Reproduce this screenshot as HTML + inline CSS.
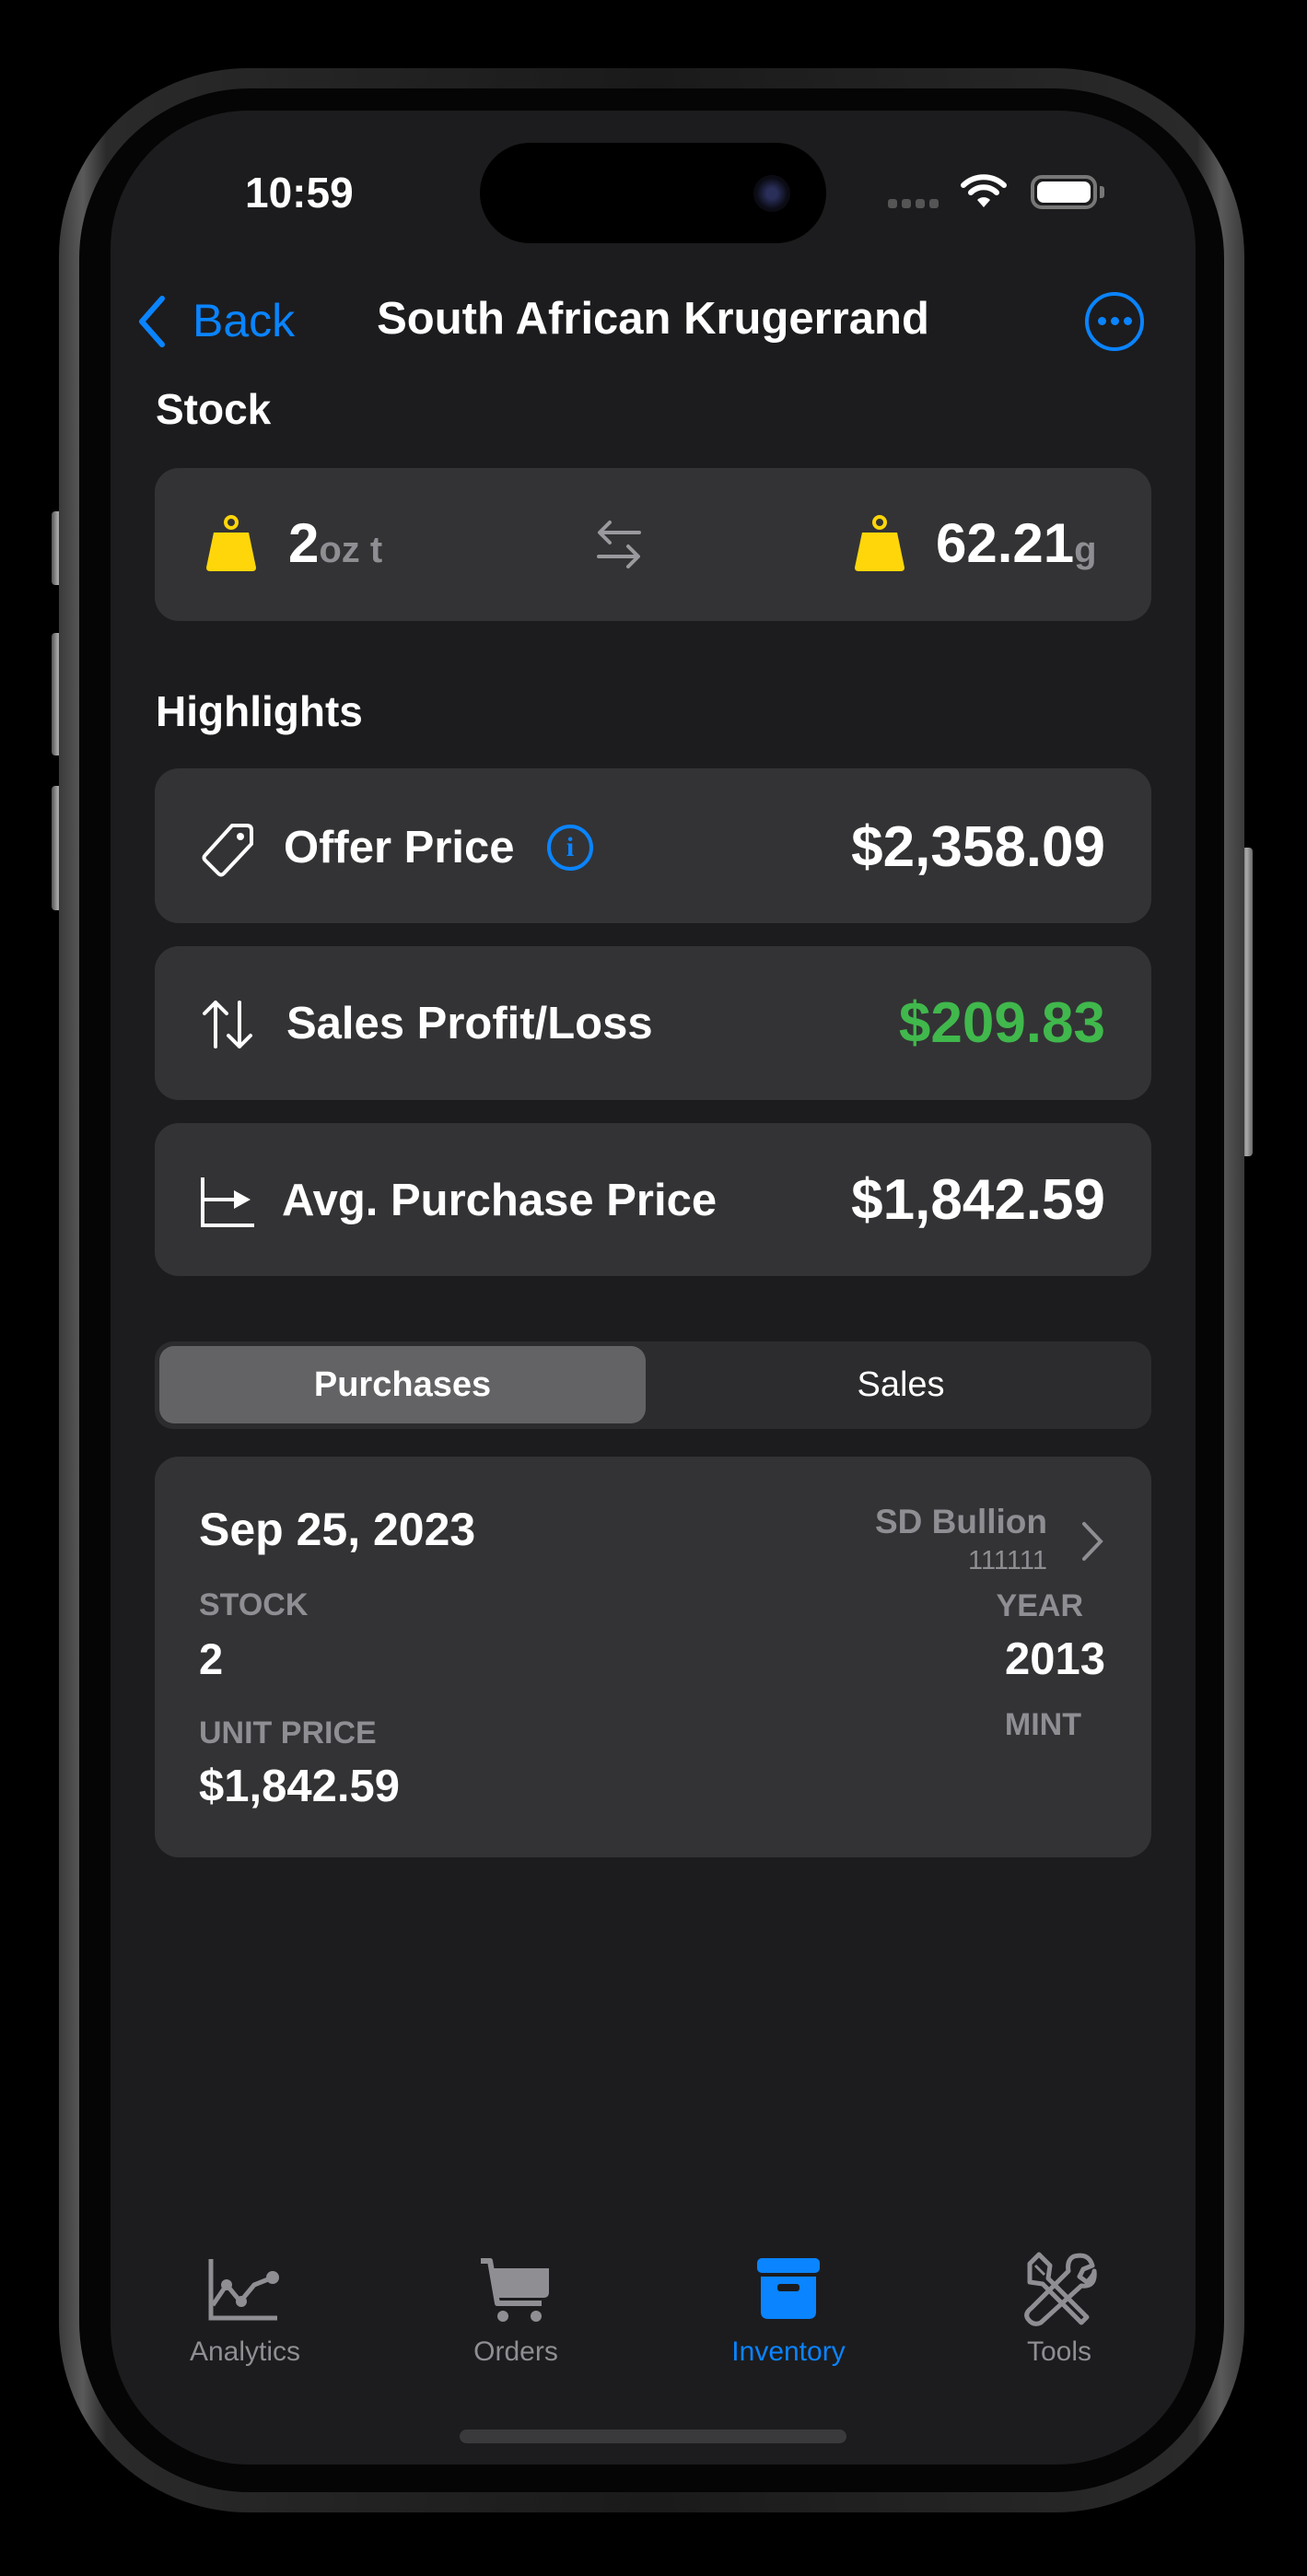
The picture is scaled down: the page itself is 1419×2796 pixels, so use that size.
<!DOCTYPE html>
<html><head><meta charset="utf-8"><style>
*{margin:0;padding:0;box-sizing:border-box}
body{width:1419px;height:2796px;background:#000;position:relative;overflow:hidden;font-family:"Liberation Sans",sans-serif;color:#fff}
.a{position:absolute}
.t{position:absolute;white-space:nowrap;line-height:1}
.card{position:absolute;left:168px;width:1082px;background:#333335;border-radius:26px}
.btn{position:absolute;background:linear-gradient(90deg,#555,#aaa,#666);border-radius:4px}
</style></head><body>
<!-- side buttons -->
<div class="btn" style="left:56px;top:555px;width:14px;height:80px"></div>
<div class="btn" style="left:56px;top:687px;width:14px;height:133px"></div>
<div class="btn" style="left:56px;top:853px;width:14px;height:135px"></div>
<div class="btn" style="left:1347px;top:920px;width:13px;height:335px"></div>
<!-- frame -->
<div class="a" style="left:64px;top:74px;width:1287px;height:2653px;border-radius:205px;background:linear-gradient(90deg,#3a3a3a,#5a5a5a 2%,#2a2a2a 4%,#1a1a1a 50%,#2a2a2a 96%,#5a5a5a 98%,#3a3a3a)"></div>
<div class="a" style="left:86px;top:96px;width:1243px;height:2609px;border-radius:185px;background:#050505"></div>
<!-- screen -->
<div class="a" style="left:120px;top:120px;width:1178px;height:2555px;border-radius:150px;background:#1c1c1e;overflow:hidden">
</div>
<!-- island -->
<div class="a" style="left:521px;top:155px;width:376px;height:109px;border-radius:55px;background:#000"></div>
<div class="a" style="left:818px;top:190px;width:40px;height:40px;border-radius:50%;background:radial-gradient(circle,#2a2f5a 20%,#0b0b14 60%)"></div>
<!-- status -->
<div class="t" style="left:266px;top:186px;font-size:46px;font-weight:bold">10:59</div>
<div class="a" style="left:964px;top:216px;width:60px;height:10px;display:flex;gap:5px">
<i style="width:10px;height:10px;border-radius:3px;background:#555"></i><i style="width:10px;height:10px;border-radius:3px;background:#555"></i><i style="width:10px;height:10px;border-radius:3px;background:#555"></i><i style="width:10px;height:10px;border-radius:3px;background:#555"></i></div>
<svg class="a" style="left:1043px;top:188px" width="50" height="40" viewBox="0 0 50 40"><path d="M3 13 A32 32 0 0 1 47 13" stroke="#fff" stroke-width="6" fill="none" stroke-linecap="round"/><path d="M11 21 A20 20 0 0 1 39 21" stroke="#fff" stroke-width="6" fill="none" stroke-linecap="round"/><path d="M18 29 L25 37 L32 29 A10 10 0 0 0 18 29Z" fill="#fff"/></svg>
<div class="a" style="left:1119px;top:190px;width:72px;height:37px;border:4px solid #777;border-radius:12px;padding:3px"><div style="width:100%;height:100%;background:#fff;border-radius:7px"></div></div>
<div class="a" style="left:1194px;top:202px;width:5px;height:13px;background:#777;border-radius:0 3px 3px 0"></div>
<!-- nav -->
<svg class="a" style="left:146px;top:320px" width="36" height="58" viewBox="0 0 36 58"><path d="M30 4 L8 29 L30 54" stroke="#0a84ff" stroke-width="6" fill="none" stroke-linecap="round" stroke-linejoin="round"/></svg>
<div class="t" style="left:209px;top:323px;font-size:50px;color:#0a84ff">Back</div>
<div class="t" style="left:406px;top:322px;font-size:49px;font-weight:bold;width:606px;text-align:center">South African Krugerrand</div>
<div class="a" style="left:1178px;top:317px;width:64px;height:64px;border:4px solid #0a84ff;border-radius:50%"></div>
<div class="a" style="left:1192px;top:344px;display:flex;gap:5px"><i style="width:9px;height:9px;border-radius:50%;background:#0a84ff"></i><i style="width:9px;height:9px;border-radius:50%;background:#0a84ff"></i><i style="width:9px;height:9px;border-radius:50%;background:#0a84ff"></i></div>
<!-- Stock -->
<div class="t" style="left:169px;top:421px;font-size:46px;font-weight:bold">Stock</div>
<div class="card" style="top:508px;height:166px"></div>
<svg class="a" style="left:220px;top:558px" width="62" height="64" viewBox="0 0 62 64"><circle cx="31" cy="9" r="6" stroke="#ffd60a" stroke-width="4" fill="none"/><path d="M12 20 H50 L58 58 Q58 62 54 62 H8 Q4 62 4 58Z" fill="#ffd60a"/></svg>
<div class="t" style="left:313px;top:560px;font-size:60px;font-weight:bold">2<span style="font-size:40px;color:#8e8e93;font-weight:bold">oz t</span></div>
<svg class="a" style="left:646px;top:563px" width="52" height="56" viewBox="0 0 52 56"><path d="M48 15 H6 M16 4 L5 15 L16 26 M4 41 H46 M36 30 L47 41 L36 52" stroke="#9a9a9e" stroke-width="4" fill="none" stroke-linecap="round" stroke-linejoin="round"/></svg>
<svg class="a" style="left:924px;top:558px" width="62" height="64" viewBox="0 0 62 64"><circle cx="31" cy="9" r="6" stroke="#ffd60a" stroke-width="4" fill="none"/><path d="M12 20 H50 L58 58 Q58 62 54 62 H8 Q4 62 4 58Z" fill="#ffd60a"/></svg>
<div class="t" style="left:1016px;top:560px;font-size:60px;font-weight:bold">62.21<span style="font-size:40px;color:#8e8e93">g</span></div>
<!-- Highlights -->
<div class="t" style="left:169px;top:749px;font-size:46px;font-weight:bold">Highlights</div>
<div class="card" style="top:834px;height:168px"></div>
<div class="card" style="top:1027px;height:167px"></div>
<div class="card" style="top:1219px;height:166px"></div>
<svg class="a" style="left:218px;top:892px" width="62" height="62" viewBox="0 0 62 62"><path d="M34 4 H50 Q55 4 55 9 V24 L25 56 Q22 59 19 56 L5 42 Q2 39 5 36Z" stroke="#fff" stroke-width="4" fill="none" stroke-linejoin="round"/><circle cx="43" cy="16" r="4" fill="#fff"/></svg>
<div class="t" style="left:308px;top:896px;font-size:49px;font-weight:bold">Offer Price</div>
<div class="a" style="left:594px;top:895px;width:50px;height:50px;border:4px solid #0a84ff;border-radius:50%;color:#0a84ff;font:bold 30px 'Liberation Serif',serif;text-align:center;line-height:42px">i</div>
<div class="t" style="right:219px;top:889px;font-size:62px;font-weight:bold">$2,358.09</div>
<svg class="a" style="left:218px;top:1084px" width="62" height="56" viewBox="0 0 62 56"><path d="M16 52 V4 M4 16 L16 4 L28 16 M42 4 V52 M30 40 L42 52 L54 40" stroke="#fff" stroke-width="4" fill="none" stroke-linecap="round" stroke-linejoin="round"/></svg>
<div class="t" style="left:311px;top:1087px;font-size:49px;font-weight:bold">Sales Profit/Loss</div>
<div class="t" style="right:219px;top:1080px;font-size:62px;font-weight:bold;color:#40b84c">$209.83</div>
<svg class="a" style="left:216px;top:1276px" width="62" height="56" viewBox="0 0 62 56"><path d="M4 2 V54 H60 M4 26 H40" stroke="#fff" stroke-width="4" fill="none"/><path d="M38 16 L56 26 L38 36Z" fill="#fff"/></svg>
<div class="t" style="left:306px;top:1279px;font-size:49px;font-weight:bold">Avg. Purchase Price</div>
<div class="t" style="right:219px;top:1272px;font-size:62px;font-weight:bold">$1,842.59</div>
<!-- segmented -->
<div class="a" style="left:168px;top:1456px;width:1082px;height:95px;background:#2c2c2e;border-radius:20px"></div>
<div class="a" style="left:173px;top:1461px;width:528px;height:84px;background:#636366;border-radius:16px"></div>
<div class="t" style="left:173px;top:1484px;width:528px;text-align:center;font-size:38px;font-weight:bold">Purchases</div>
<div class="t" style="left:709px;top:1484px;width:538px;text-align:center;font-size:38px">Sales</div>
<!-- purchase card -->
<div class="card" style="top:1581px;height:435px"></div>
<div class="t" style="left:216px;top:1635px;font-size:50px;font-weight:bold">Sep 25, 2023</div>
<div class="t" style="right:282px;top:1633px;font-size:37px;font-weight:bold;color:#8e8e93">SD Bullion</div>
<div class="t" style="right:282px;top:1680px;font-size:29px;color:#8e8e93">111111</div>
<svg class="a" style="left:1173px;top:1650px" width="26" height="46" viewBox="0 0 26 46"><path d="M4 4 L22 23 L4 42" stroke="#8e8e93" stroke-width="4" fill="none" stroke-linecap="round"/></svg>
<div class="t" style="left:216px;top:1725px;font-size:34px;font-weight:bold;color:#8e8e93">STOCK</div>
<div class="t" style="left:216px;top:1777px;font-size:47px;font-weight:bold">2</div>
<div class="t" style="right:243px;top:1726px;font-size:34px;font-weight:bold;color:#8e8e93">YEAR</div>
<div class="t" style="right:219px;top:1777px;font-size:49px;font-weight:bold">2013</div>
<div class="t" style="left:216px;top:1864px;font-size:34px;font-weight:bold;color:#8e8e93">UNIT PRICE</div>
<div class="t" style="right:245px;top:1855px;font-size:34px;font-weight:bold;color:#8e8e93">MINT</div>
<div class="t" style="left:216px;top:1915px;font-size:49px;font-weight:bold">$1,842.59</div>
<!-- tab bar -->
<svg class="a" style="left:226px;top:2450px" width="80" height="70" viewBox="0 0 80 70"><path d="M3 2 V66 H75" stroke="#8e8e93" stroke-width="5" fill="none"/><path d="M5 52 L20 30 L35 48 L50 30 L70 22" stroke="#8e8e93" stroke-width="5" fill="none" stroke-linejoin="round"/><circle cx="20" cy="30" r="6" fill="#8e8e93"/><circle cx="36" cy="48" r="6" fill="#8e8e93"/><circle cx="70" cy="22" r="7" fill="#8e8e93"/></svg>
<div class="t" style="left:166px;top:2538px;width:200px;text-align:center;font-size:30px;color:#8e8e93">Analytics</div>
<svg class="a" style="left:518px;top:2450px" width="84" height="72" viewBox="0 0 84 72"><path d="M4 4 H14 L22 50 H70" stroke="#8e8e93" stroke-width="6" fill="none" stroke-linejoin="round"/><path d="M16 12 H78 V38 Q78 44 72 44 H22Z" fill="#8e8e93"/><circle cx="28" cy="64" r="6" fill="#8e8e93"/><circle cx="64" cy="64" r="6" fill="#8e8e93"/></svg>
<div class="t" style="left:460px;top:2538px;width:200px;text-align:center;font-size:30px;color:#8e8e93">Orders</div>
<svg class="a" style="left:822px;top:2451px" width="70" height="67" viewBox="0 0 70 67"><rect x="0" y="0" width="68" height="16" rx="5" fill="#0a84ff"/><path d="M4 20 H64 V58 Q64 66 56 66 H12 Q4 66 4 58Z" fill="#0a84ff"/><rect x="22" y="28" width="24" height="8" rx="3" fill="#1c1c1e"/></svg>
<div class="t" style="left:756px;top:2538px;width:200px;text-align:center;font-size:30px;color:#0a84ff">Inventory</div>
<svg class="a" style="left:1108px;top:2443px" width="84" height="82" viewBox="0 0 84 82"><path d="M10 14 L20 4 L32 16 L30 30 L72 72 L66 78 L24 36 L10 34Z" stroke="#8e8e93" stroke-width="5" fill="none" stroke-linejoin="round"/><path d="M58 6 Q74 2 78 16 L68 20 L64 28 L72 34 Q80 26 80 22 Q82 40 66 38 L22 78 Q14 82 8 74 Q4 68 12 62 L52 22 Q50 10 58 6Z" stroke="#8e8e93" stroke-width="5" fill="none" stroke-linejoin="round"/><path d="M16 16 L26 26" stroke="#8e8e93" stroke-width="3"/></svg>
<div class="t" style="left:1050px;top:2538px;width:200px;text-align:center;font-size:30px;color:#8e8e93">Tools</div>
<div class="a" style="left:499px;top:2637px;width:420px;height:15px;border-radius:8px;background:#3a3a3c"></div>
</body></html>
